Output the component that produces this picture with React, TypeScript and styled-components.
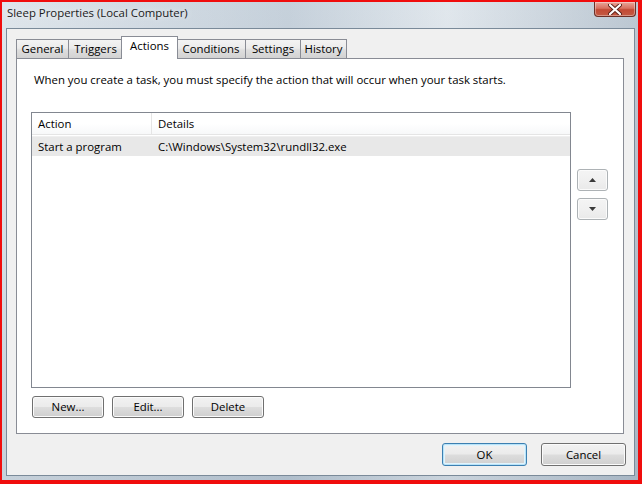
import React from "react";
import styled, { createGlobalStyle, css } from "styled-components";

const Global = createGlobalStyle`
  html, body { margin: 0; padding: 0; background: #ffffff; }
  body { font-family: "Open Sans", "Noto Sans", "Liberation Sans", sans-serif; font-size: 11.4px; color: #000; }
  * { box-sizing: border-box; }
`;

const Screen = styled.div`
  width: 642px;
  height: 484px;
  border-style: solid;
  border-color: #f00d0d;
  border-width: 2px 4px 4px 2px;
  display: flex;
`;

const Frame = styled.div`
  flex: 1;
  display: flex;
  flex-direction: column;
  padding: 0 3px 4px 4px;
  background:
    linear-gradient(90deg, rgba(255,255,255,0.15) 0%, rgba(140,160,180,0.25) 45%, rgba(255,255,255,0.2) 70%, rgba(120,140,160,0.3) 100%),
    linear-gradient(180deg, #d9e1e8 0%, #cfd8e0 50%, #bcc8d3 100%);
`;

const TitleBar = styled.div`
  height: 26px;
  display: flex;
  align-items: flex-start;
  justify-content: space-between;
`;

const Title = styled.div`
  padding: 3px 0 0 1px;
  font-size: 11.4px;
  color: #1a1a1a;
  line-height: 16px;
  text-shadow: 0 0 6px rgba(255,255,255,0.9);
`;

const CloseButton = styled.div`
  width: 42px;
  height: 15px;
  margin-right: -1px;
  border: 1px solid #6b2f27;
  border-top: none;
  border-radius: 0 0 4px 4px;
  background: linear-gradient(180deg, #e8a79c 0%, #d8705f 45%, #c24a35 55%, #c45a44 100%);
  box-shadow: inset 0 0 0 1px rgba(255,255,255,0.35);
  display: flex;
  align-items: center;
  justify-content: center;
`;

const Client = styled.div`
  flex: 1;
  display: flex;
  flex-direction: column;
  background: #f0f0f0;
  border: 1px solid #7a8a99;
  padding: 7px 10px 9px 9px;
`;

const TabStrip = styled.div`
  display: flex;
  align-items: flex-end;
  height: 22px;
  position: relative;
  z-index: 1;
`;

const Tab = styled.div<{ $w: number; $active?: boolean }>`
  width: ${(p) => p.$w}px;
  height: 19px;
  border: 1px solid #898c95;
  border-bottom: none;
  margin-left: -1px;
  background: linear-gradient(180deg, #f3f3f3 0%, #ebebeb 45%, #dedede 55%, #d2d2d2 100%);
  display: flex;
  align-items: center;
  justify-content: center;
  font-size: 11.4px;
  line-height: 16px;
  padding-bottom: 1px;
  &:first-child { margin-left: 0; }
  ${(p) =>
    p.$active &&
    css`
      height: 23px;
      margin-bottom: -1px;
      margin-left: -2px;
      margin-right: -1px;
      background: #ffffff;
      padding-bottom: 4px;
      position: relative;
    `}
`;

const Panel = styled.div`
  flex: 1;
  background: #ffffff;
  border: 1px solid #898c95;
  display: flex;
  flex-direction: column;
  padding: 13px 0 0 14px;
`;

const Description = styled.div`
  font-size: 11.4px;
  line-height: 16px;
  padding-left: 3px;
  height: 40px;
`;

const ListArea = styled.div`
  display: flex;
  gap: 6px;
`;

const ListBox = styled.div`
  width: 540px;
  height: 276px;
  border: 1px solid #828790;
  background: #fff;
  display: flex;
  flex-direction: column;
`;

const HeaderRow = styled.div`
  display: flex;
  height: 22px;
  border-bottom: 1px solid #e5e5e5;
  background: linear-gradient(180deg, #ffffff 0%, #ffffff 50%, #f7f8f9 100%);
`;

const Cell = styled.div<{ $w?: number; $divider?: boolean }>`
  ${(p) => (p.$w ? `width: ${p.$w}px;` : "flex: 1;")}
  display: flex;
  align-items: center;
  padding-left: 6px;
  font-size: 11.4px;
  line-height: 16px;
  ${(p) => p.$divider && "border-right: 1px solid #e5e5e5;"}
`;

const DataRow = styled.div`
  display: flex;
  height: 20px;
  margin-top: 1px;
  background: #e8e8e8;
  border-top: 1px solid #efefef;
`;

const SideButtons = styled.div`
  display: flex;
  flex-direction: column;
  gap: 7px;
  padding-top: 57px;
`;

const buttonBase = css`
  border: 1px solid #707070;
  border-radius: 3px;
  background: linear-gradient(180deg, #f2f2f2 0%, #ebebeb 48%, #dddddd 52%, #cfcfcf 100%);
  box-shadow: inset 0 0 0 1px #fbfbfb;
  display: flex;
  align-items: center;
  justify-content: center;
  font-size: 11.4px;
  line-height: 16px;
  color: #000;
`;

const ArrowButton = styled.div`
  ${buttonBase};
  width: 31px;
  height: 22px;
  border-color: #adb2b5;
  background: linear-gradient(180deg, #f4f4f4 0%, #f0f0f0 50%, #e9e9e9 100%);
`;

const ButtonRow = styled.div`
  display: flex;
  gap: 8px;
  padding: 8px 0 0 1px;
`;

const Button = styled.div<{ $w: number; $h: number; $default?: boolean }>`
  ${buttonBase};
  width: ${(p) => p.$w}px;
  height: ${(p) => p.$h}px;
  ${(p) =>
    p.$default &&
    css`
      border-color: #3c7fb1;
      box-shadow: inset 0 0 0 1px #b8e3f8, inset 0 0 0 2px #e1f3fc;
    `}
`;

const Footer = styled.div`
  display: flex;
  justify-content: flex-end;
  gap: 14px;
  padding-top: 9px;
  margin-right: -2px;
`;

const Arrow = ({ up }: { up?: boolean }) => (
  <svg width="7" height="4" viewBox="0 0 7 4">
    <path d={up ? "M0 4 L3.5 0 L7 4 Z" : "M0 0 L7 0 L3.5 4 Z"} fill="#3a3a3a" />
  </svg>
);

export default function App() {
  return (
    <>
      <Global />
      <Screen>
        <Frame>
          <TitleBar>
            <Title>Sleep Properties (Local Computer)</Title>
            <CloseButton>
              <svg width="14" height="11" viewBox="0 0 14 11">
                <path d="M2 1 L12 10 M12 1 L2 10" stroke="#5a2018" strokeWidth="4" strokeLinecap="round" />
                <path d="M2 1 L12 10 M12 1 L2 10" stroke="#ffffff" strokeWidth="2.2" strokeLinecap="round" />
              </svg>
            </CloseButton>
          </TitleBar>
          <Client>
            <TabStrip>
              <Tab $w={53}>General</Tab>
              <Tab $w={55}>Triggers</Tab>
              <Tab $w={57} $active>Actions</Tab>
              <Tab $w={70}>Conditions</Tab>
              <Tab $w={56}>Settings</Tab>
              <Tab $w={47}>History</Tab>
            </TabStrip>
            <Panel>
              <Description>
                When you create a task, you must specify the action that will occur when your task starts.
              </Description>
              <ListArea>
                <ListBox>
                  <HeaderRow>
                    <Cell $w={120} $divider>Action</Cell>
                    <Cell>Details</Cell>
                  </HeaderRow>
                  <DataRow>
                    <Cell $w={120}>Start a program</Cell>
                    <Cell>C:\Windows\System32\rundll32.exe</Cell>
                  </DataRow>
                </ListBox>
                <SideButtons>
                  <ArrowButton>
                    <Arrow up />
                  </ArrowButton>
                  <ArrowButton>
                    <Arrow />
                  </ArrowButton>
                </SideButtons>
              </ListArea>
              <ButtonRow>
                <Button $w={72} $h={22}>New...</Button>
                <Button $w={72} $h={22}>Edit...</Button>
                <Button $w={72} $h={22}>Delete</Button>
              </ButtonRow>
            </Panel>
            <Footer>
              <Button $w={85} $h={23} $default>OK</Button>
              <Button $w={85} $h={23}>Cancel</Button>
            </Footer>
          </Client>
        </Frame>
      </Screen>
    </>
  );
}
